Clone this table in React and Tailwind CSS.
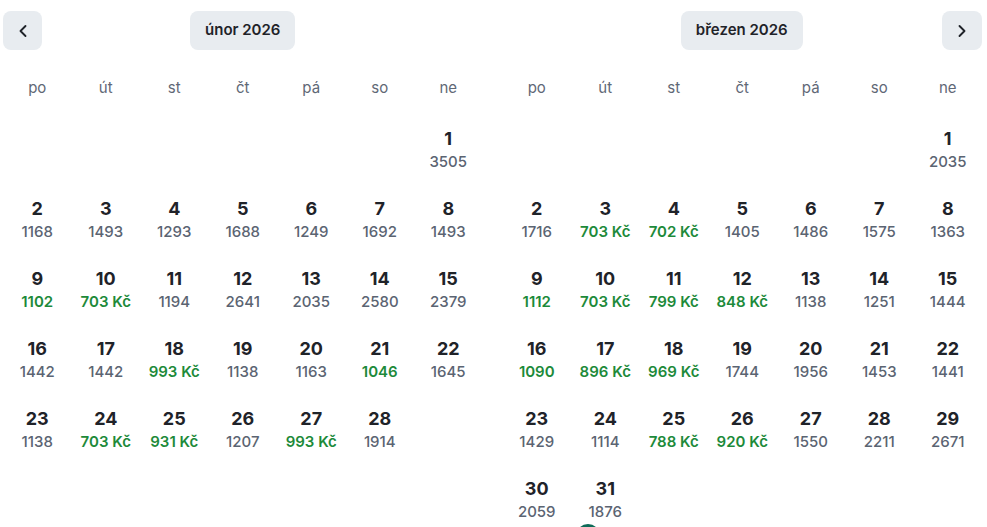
import React from 'react'
import { ChevronLeft, ChevronRight } from 'lucide-react'

const WEEKDAYS = ['po', 'út', 'st', 'čt', 'pá', 'so', 'ne']

// [day, price, cheap]
const FEB = {
  offset: 6,
  days: [
    [1, '3505'],
    [2, '1168'], [3, '1493'], [4, '1293'], [5, '1688'], [6, '1249'], [7, '1692'], [8, '1493'],
    [9, '1102', true], [10, '703 Kč', true], [11, '1194'], [12, '2641'], [13, '2035'], [14, '2580'], [15, '2379'],
    [16, '1442'], [17, '1442'], [18, '993 Kč', true], [19, '1138'], [20, '1163'], [21, '1046', true], [22, '1645'],
    [23, '1138'], [24, '703 Kč', true], [25, '931 Kč', true], [26, '1207'], [27, '993 Kč', true], [28, '1914'],
  ],
}

const MAR = {
  offset: 6,
  days: [
    [1, '2035'],
    [2, '1716'], [3, '703 Kč', true], [4, '702 Kč', true], [5, '1405'], [6, '1486'], [7, '1575'], [8, '1363'],
    [9, '1112', true], [10, '703 Kč', true], [11, '799 Kč', true], [12, '848 Kč', true], [13, '1138'], [14, '1251'], [15, '1444'],
    [16, '1090', true], [17, '896 Kč', true], [18, '969 Kč', true], [19, '1744'], [20, '1956'], [21, '1453'], [22, '1441'],
    [23, '1429'], [24, '1114'], [25, '788 Kč', true], [26, '920 Kč', true], [27, '1550'], [28, '2211'], [29, '2671'],
    [30, '2059'], [31, '1876'],
  ],
}

function Month({ title, data, left }) {
  const cells = []
  for (let i = 0; i < data.offset; i++) cells.push(<div key={'e' + i} className="h-[70px]" />)
  data.days.forEach(([d, price, cheap]) => {
    cells.push(
      <div key={d} className="h-[70px] pt-[14px] flex flex-col items-center cursor-pointer">
        <span className="text-[18px] leading-6 font-bold text-[#1f2329]">{d}</span>
        <span
          className={`text-[15px] leading-5 mt-px ${
            cheap ? 'font-semibold text-[#1d8a3a]' : 'font-medium text-[#5b6472]'
          }`}
        >
          {price}
        </span>
      </div>
    )
  })

  return (
    <div className="w-[479.5px] flex flex-col">
      <div className="h-[39px] flex items-center justify-between">
        {left ? (
          <button className="w-[39px] h-[39px] rounded-lg bg-[#e8ecf0] flex items-center justify-center text-[#1f2329]">
            <ChevronLeft size={20} strokeWidth={2.25} />
          </button>
        ) : (
          <div className="w-[39px]" />
        )}
        <div className="h-[39px] px-[15px] rounded-lg bg-[#e8ecf0] flex items-center text-[15px] font-semibold text-[#1f2329]">
          {title}
        </div>
        {!left ? (
          <button className="w-[40px] h-[39px] rounded-lg bg-[#e8ecf0] flex items-center justify-center text-[#1f2329]">
            <ChevronRight size={20} strokeWidth={2.25} />
          </button>
        ) : (
          <div className="w-[39px]" />
        )}
      </div>
      <div className="mt-[28px] grid grid-cols-7">
        {WEEKDAYS.map((w) => (
          <div key={w} className="text-center text-[15px] leading-5 text-[#5f6876]">
            {w}
          </div>
        ))}
      </div>
      <div className="mt-[15px] grid grid-cols-7">{cells}</div>
    </div>
  )
}

export default function App() {
  return (
    <div
      className="relative w-[987px] h-[527px] overflow-hidden bg-white"
      style={{ fontFamily: 'Inter, "Noto Sans", sans-serif' }}
    >
      <div className="flex gap-[20px] pl-[3px] pt-[11px]">
        <Month title="únor 2026" data={FEB} left />
        <Month title="březen 2026" data={MAR} />
      </div>
      <div className="absolute left-[576px] top-[524px] w-[24px] h-[24px] rounded-full bg-[#0d6b58]" />
    </div>
  )
}
